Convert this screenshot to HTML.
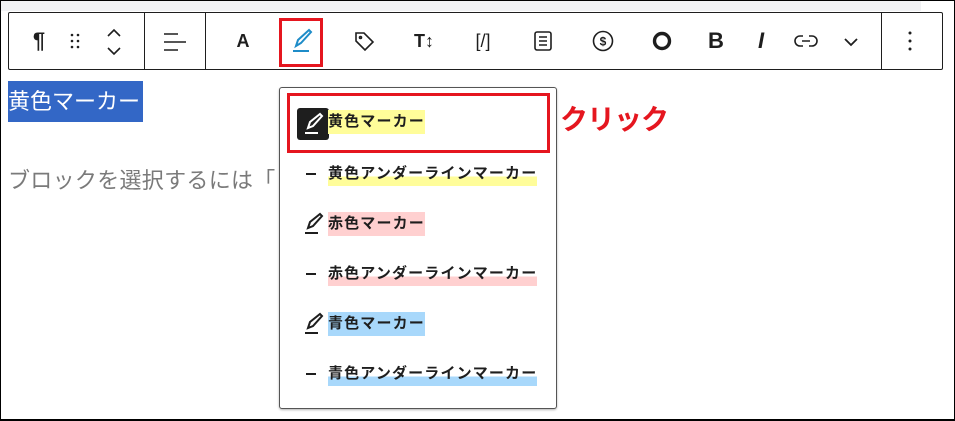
<!DOCTYPE html>
<html><head><meta charset="utf-8"><style>
*{margin:0;padding:0;box-sizing:border-box}
body{width:955px;height:421px;background:#fff;position:relative;overflow:hidden;font-family:"Liberation Sans","Noto Sans CJK JP",sans-serif}
.frame{position:absolute;left:0;top:0;width:955px;height:421px;border:1px solid #000;border-bottom-width:2px}
.strip{position:absolute;left:1px;top:1px;width:920px;height:10px;background:#f1f2f4}
.tb{position:absolute;left:8px;top:12px;width:935px;height:58px;border:1px solid #1e1e1e;border-radius:2px;background:#fff}
.sep{position:absolute;top:12px;width:1px;height:58px;background:#1e1e1e}
.ic{position:absolute;top:41px;transform:translate(-50%,-50%);font-weight:bold;color:#1e1e1e;font-size:17px;line-height:1}
.sel{position:absolute;left:8px;top:81px;width:135px;height:41px;background:#3367c6;color:#fff;font-size:22px;line-height:41px;padding-left:0}
.ph{position:absolute;left:8px;top:166px;color:#7a7a7a;font-size:22px;line-height:30px;letter-spacing:0.3px}
.pop{position:absolute;left:279px;top:87px;width:278px;height:322px;border:1px solid #555;border-radius:3px;background:#fff;box-shadow:0 1px 2px rgba(0,0,0,.3)}
.it{position:absolute;left:328px;font-size:15px;letter-spacing:1.15px;font-weight:bold;color:#1e1e1e;line-height:24px;height:24px;white-space:nowrap;padding-right:0}
.dash{position:absolute;left:306px;width:10px;height:2px;background:#1e1e1e}
.red{position:absolute;border:3px solid #e5161f}
.click{position:absolute;left:560px;top:98px;color:#e5161f;font-size:28px;font-weight:bold;letter-spacing:-1px}
</style></head><body>
<div class="strip"></div>
<div class="tb"></div>
<div class="sep" style="left:144px"></div>
<div class="sep" style="left:205px"></div>
<div class="sep" style="left:881px"></div>
<div class="ic" style="left:39px;font-size:22px">¶</div>
<svg style="position:absolute;left:70px;top:33px" width="10" height="16"><g fill="#1e1e1e"><circle cx="2" cy="2" r="1.3"/><circle cx="8" cy="2" r="1.3"/><circle cx="2" cy="8" r="1.3"/><circle cx="8" cy="8" r="1.3"/><circle cx="2" cy="14" r="1.3"/><circle cx="8" cy="14" r="1.3"/></g></svg>
<svg style="position:absolute;left:106px;top:28px" width="16" height="28" fill="none" stroke="#1e1e1e" stroke-width="1.6"><path d="M2 8l6-6 6 6M2 20l6 6 6-6"/></svg>
<svg style="position:absolute;left:164px;top:32px" width="22" height="20" stroke="#1e1e1e" stroke-width="1.6"><path d="M0 2h14M0 10h22M0 18h14"/></svg>
<div class="ic" style="left:243px;font-size:18px">A</div>
<svg style="position:absolute;left:290px;top:28px" width="24" height="26" fill="none" stroke="#1e8cc8" stroke-width="2"><path d="M6 18l2-6 11-10 2 2-10 11z"/><path d="M3 23h16"/></svg>
<svg style="position:absolute;left:353px;top:30px" width="22" height="22" fill="none" stroke="#1e1e1e" stroke-width="1.6"><path d="M3 3h8l9 9-8 8-9-9z"/><circle cx="7.5" cy="7.5" r="1"/></svg>
<div class="ic" style="left:424px;font-size:18px">T↕</div>
<div class="ic" style="left:483px;font-size:18px;font-weight:normal">[/]</div>
<svg style="position:absolute;left:534px;top:31px" width="18" height="20" fill="none" stroke="#1e1e1e" stroke-width="1.6"><rect x="1" y="1" width="16" height="18" rx="2"/><path d="M5 6h8M5 10h8M5 14h8"/></svg>
<svg style="position:absolute;left:592px;top:30px" width="22" height="22" fill="none" stroke="#1e1e1e" stroke-width="1.6"><circle cx="11" cy="11" r="9.5"/><text x="11" y="15.5" font-size="12" text-anchor="middle" fill="#1e1e1e" stroke="none" font-weight="bold" font-family="Liberation Sans">$</text></svg>
<svg style="position:absolute;left:652px;top:31px" width="20" height="20" fill="none" stroke="#1e1e1e" stroke-width="3.4"><circle cx="10" cy="10" r="7.5"/></svg>
<div class="ic" style="left:716px;font-size:22px">B</div>
<div class="ic" style="left:761px;font-size:22px;font-style:italic">I</div>
<svg style="position:absolute;left:794px;top:34px" width="24" height="14" fill="none" stroke="#1e1e1e" stroke-width="1.6"><path d="M9 2H6a5 5 0 0 0 0 10h3M15 2h3a5 5 0 0 1 0 10h-3M8 7h8"/></svg>
<svg style="position:absolute;left:844px;top:38px" width="14" height="9" fill="none" stroke="#1e1e1e" stroke-width="1.8"><path d="M1 1l6 6 6-6"/></svg>
<svg style="position:absolute;left:908px;top:31px" width="4" height="20" fill="#1e1e1e"><circle cx="2" cy="2" r="1.5"/><circle cx="2" cy="10" r="1.5"/><circle cx="2" cy="18" r="1.5"/></svg>
<div class="red" style="left:279px;top:18px;width:44px;height:49px"></div>
<div class="sel">黄色マーカー</div>
<div class="ph">ブロックを選択するには「</div>
<div class="pop"></div>
<div style="position:absolute;left:297px;top:108px;width:32px;height:32px;background:#1e1e1e;border-radius:3px"></div>
<svg style="position:absolute;left:302px;top:112px" width="22" height="24" fill="none" stroke="#fff" stroke-width="2"><path d="M6 16l2-6 10-8 2 2-9 10z"/><path d="M3 21h13"/></svg>
<div class="it" style="top:110px;background:#fffd9a">黄色マーカー</div>
<div class="dash" style="top:173px"></div>
<div class="it" style="top:162px;background:linear-gradient(transparent 60%,#fffd9a 60%)">黄色アンダーラインマーカー</div>
<svg style="position:absolute;left:302px;top:212px" width="22" height="24" fill="none" stroke="#1e1e1e" stroke-width="2"><path d="M6 16l2-6 10-8 2 2-9 10z"/><path d="M3 21h13"/></svg>
<div class="it" style="top:212px;background:#ffd0d0">赤色マーカー</div>
<div class="dash" style="top:273px"></div>
<div class="it" style="top:262px;background:linear-gradient(transparent 60%,#ffd0d0 60%)">赤色アンダーラインマーカー</div>
<svg style="position:absolute;left:302px;top:312px" width="22" height="24" fill="none" stroke="#1e1e1e" stroke-width="2"><path d="M6 16l2-6 10-8 2 2-9 10z"/><path d="M3 21h13"/></svg>
<div class="it" style="top:312px;background:#a8d8fb">青色マーカー</div>
<div class="dash" style="top:373px"></div>
<div class="it" style="top:362px;background:linear-gradient(transparent 60%,#a8d8fb 60%)">青色アンダーラインマーカー</div>
<div class="red" style="left:287px;top:93px;width:263px;height:60px"></div>
<div class="click">クリック</div>
<div class="frame"></div>
</body></html>
